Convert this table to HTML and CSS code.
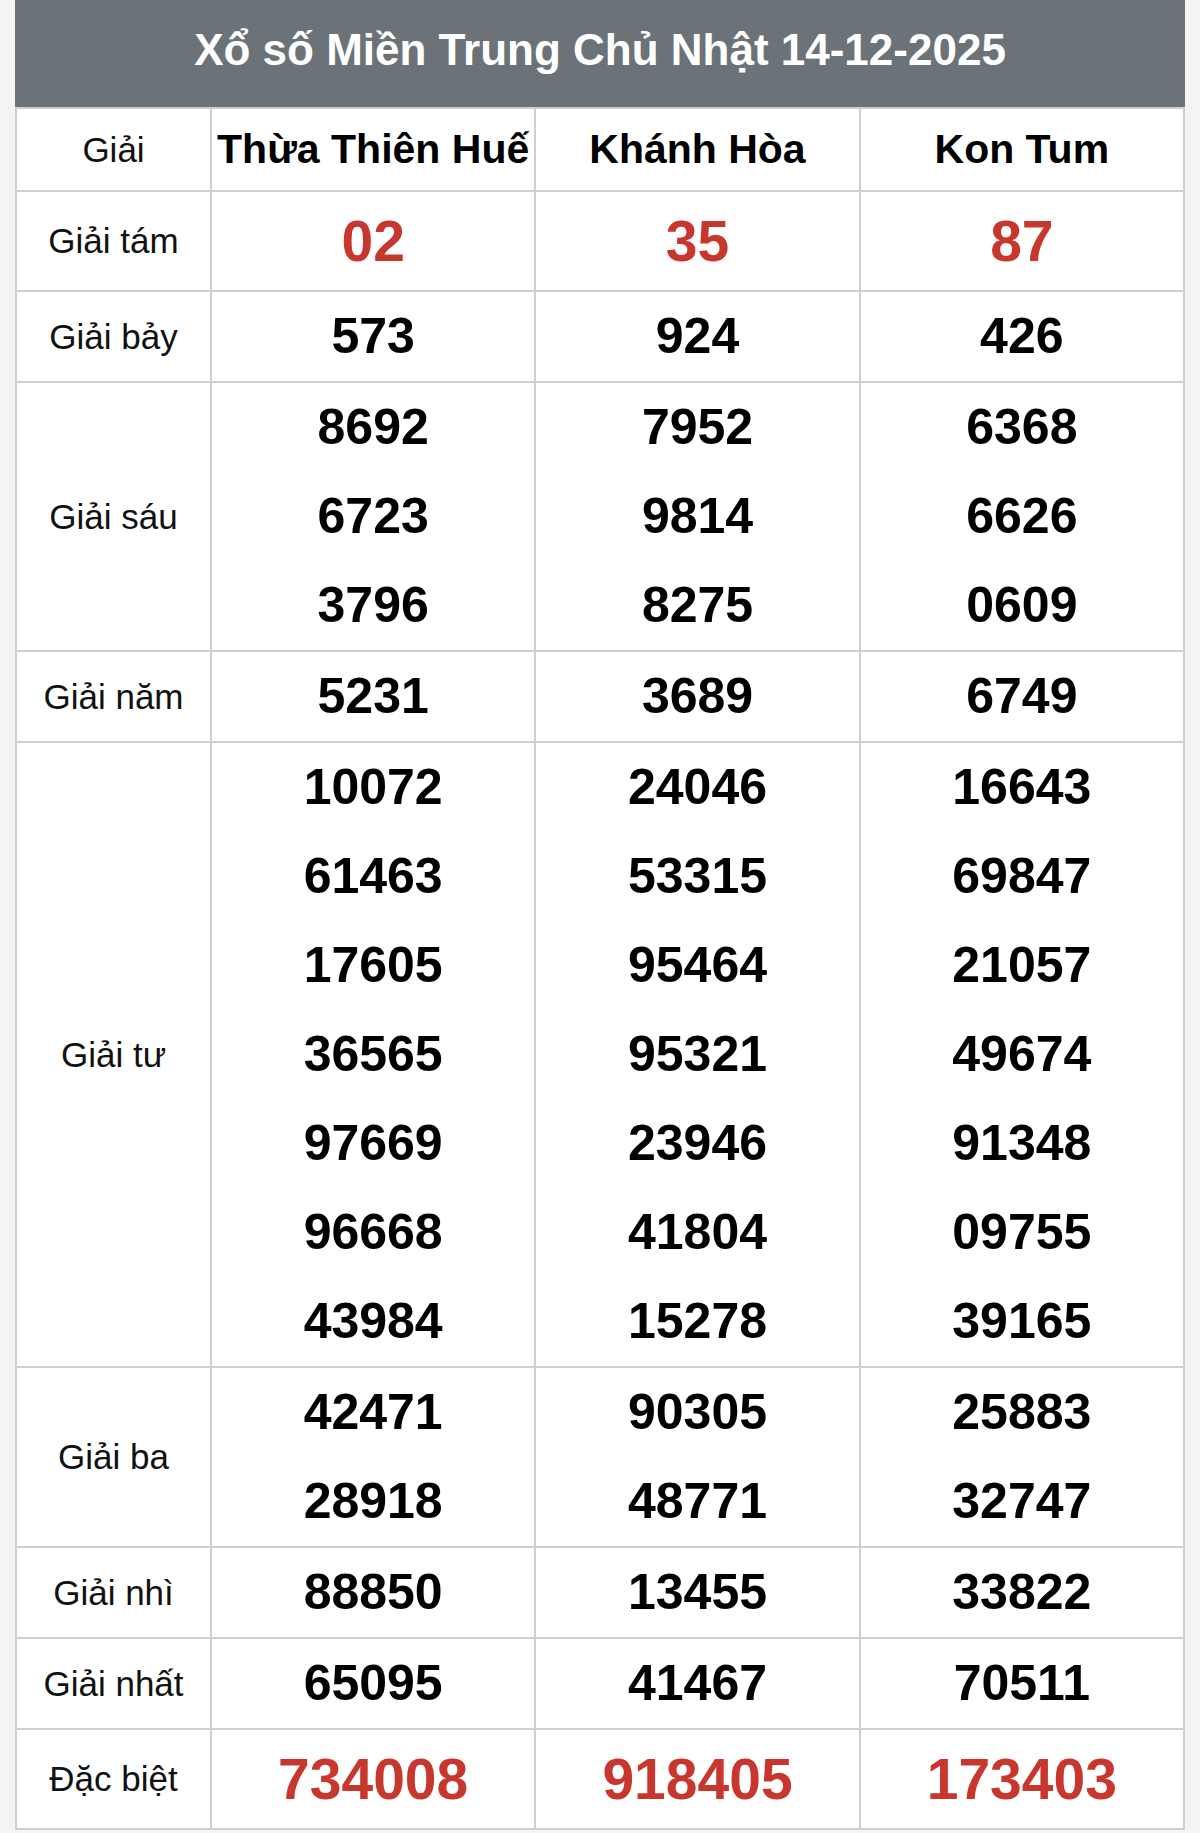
FILE: index.html
```html
<!DOCTYPE html>
<html lang="vi">
<head>
<meta charset="utf-8">
<title>Xổ số Miền Trung Chủ Nhật 14-12-2025</title>
<link rel="stylesheet" href="styles.css">
</head>
<body>
<div class="page">
  <div class="title">Xổ số Miền Trung Chủ Nhật 14-12-2025</div>
  <table class="kq">
    <colgroup>
      <col class="c-label"><col class="c-prov"><col class="c-prov"><col class="c-prov">
    </colgroup>
    <tr class="head">
      <td class="label">Giải</td>
      <th>Thừa Thiên Huế</th>
      <th>Khánh Hòa</th>
      <th>Kon Tum</th>
    </tr>
    <tr class="red-row">
      <td class="label">Giải tám</td>
      <td><div class="n red">02</div></td>
      <td><div class="n red">35</div></td>
      <td><div class="n red">87</div></td>
    </tr>
    <tr>
      <td class="label">Giải bảy</td>
      <td><div class="n">573</div></td>
      <td><div class="n">924</div></td>
      <td><div class="n">426</div></td>
    </tr>
    <tr>
      <td class="label">Giải sáu</td>
      <td><div class="n">8692</div><div class="n">6723</div><div class="n">3796</div></td>
      <td><div class="n">7952</div><div class="n">9814</div><div class="n">8275</div></td>
      <td><div class="n">6368</div><div class="n">6626</div><div class="n">0609</div></td>
    </tr>
    <tr>
      <td class="label">Giải năm</td>
      <td><div class="n">5231</div></td>
      <td><div class="n">3689</div></td>
      <td><div class="n">6749</div></td>
    </tr>
    <tr>
      <td class="label">Giải tư</td>
      <td><div class="n">10072</div><div class="n">61463</div><div class="n">17605</div><div class="n">36565</div><div class="n">97669</div><div class="n">96668</div><div class="n">43984</div></td>
      <td><div class="n">24046</div><div class="n">53315</div><div class="n">95464</div><div class="n">95321</div><div class="n">23946</div><div class="n">41804</div><div class="n">15278</div></td>
      <td><div class="n">16643</div><div class="n">69847</div><div class="n">21057</div><div class="n">49674</div><div class="n">91348</div><div class="n">09755</div><div class="n">39165</div></td>
    </tr>
    <tr>
      <td class="label">Giải ba</td>
      <td><div class="n">42471</div><div class="n">28918</div></td>
      <td><div class="n">90305</div><div class="n">48771</div></td>
      <td><div class="n">25883</div><div class="n">32747</div></td>
    </tr>
    <tr>
      <td class="label">Giải nhì</td>
      <td><div class="n">88850</div></td>
      <td><div class="n">13455</div></td>
      <td><div class="n">33822</div></td>
    </tr>
    <tr>
      <td class="label">Giải nhất</td>
      <td><div class="n">65095</div></td>
      <td><div class="n">41467</div></td>
      <td><div class="n">70511</div></td>
    </tr>
    <tr class="red-row">
      <td class="label">Đặc biệt</td>
      <td><div class="n red">734008</div></td>
      <td><div class="n red">918405</div></td>
      <td><div class="n red">173403</div></td>
    </tr>
  </table>
</div>
</body>
</html>
```
FILE: styles.css
```css
html, body {
  margin: 0;
  padding: 0;
  background: #f4f4f4;
}
body {
  font-family: "Liberation Sans", Arial, sans-serif;
  color: #000;
}
.page {
  padding: 0 15px 3px 15px;
}
.title {
  height: 107px;
  background: #6b7378;
  color: #fff;
  font-weight: bold;
  font-size: 44px;
  line-height: 100px;
  text-align: center;
  box-sizing: border-box;
}
.kq {
  width: 100%;
  border-collapse: collapse;
  background: #fff;
  table-layout: fixed;
}
.c-label { width: 195px; }
.kq td, .kq th {
  border: 2px solid #cfcfcf;
  padding: 0;
  text-align: center;
  vertical-align: middle;
}
.head th {
  font-size: 41px;
  font-weight: bold;
  height: 81px;
  white-space: nowrap;
}
.head .label {
  height: 81px;
}
.label {
  font-size: 35px;
  font-weight: normal;
  color: #111;
}
.n {
  font-size: 50px;
  font-weight: bold;
  line-height: 89px;
  color: #000;
}
.red-row .n {
  line-height: 98px;
}
.n.red {
  color: #c8372d;
  font-size: 57px;
}
```
